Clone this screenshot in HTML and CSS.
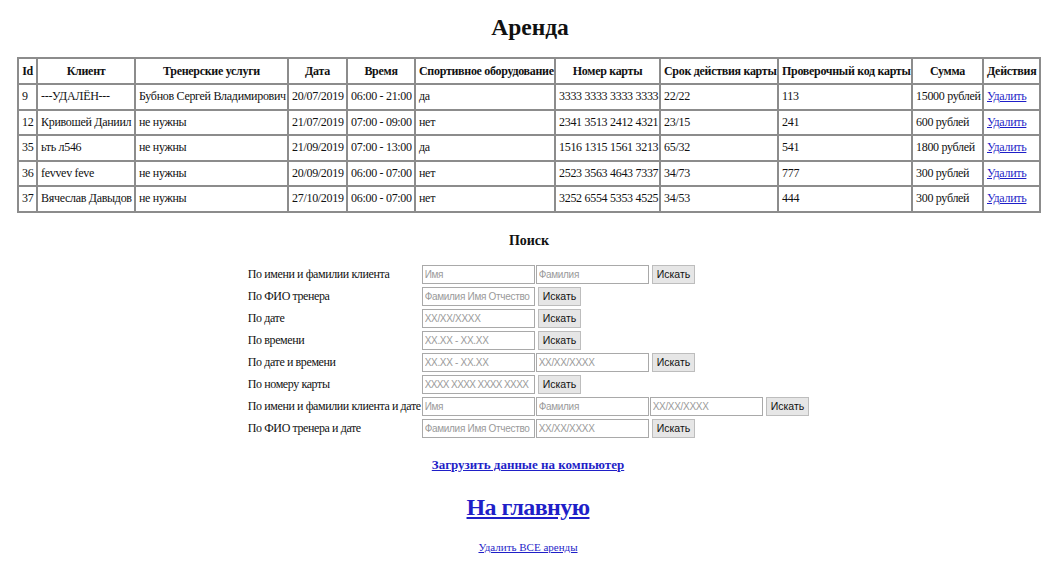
FILE: index.html
```html
<!DOCTYPE html>
<html lang="ru">
<head>
<meta charset="utf-8">
<title>Аренда</title>
<link rel="stylesheet" href="styles.css">
</head>
<body>
<h1 class="title">Аренда</h1>
<table class="rent">
  <colgroup>
    <col class="c-id"><col class="c-client"><col class="c-trainer"><col class="c-date"><col class="c-time"><col class="c-equip"><col class="c-card"><col class="c-exp"><col class="c-cvv"><col class="c-sum"><col class="c-act">
  </colgroup>
  <thead>
    <tr><th>Id</th><th>Клиент</th><th>Тренерские услуги</th><th>Дата</th><th>Время</th><th>Спортивное оборудование</th><th>Номер карты</th><th>Срок действия карты</th><th>Проверочный код карты</th><th>Сумма</th><th>Действия</th></tr>
  </thead>
  <tbody>
    <tr><td>9</td><td>---УДАЛЁН---</td><td>Бубнов Сергей Владимирович</td><td>20/07/2019</td><td>06:00 - 21:00</td><td>да</td><td>3333 3333 3333 3333</td><td>22/22</td><td>113</td><td>15000 рублей</td><td><a href="#">Удалить</a></td></tr>
    <tr><td>12</td><td>Кривошей Даниил</td><td>не нужны</td><td>21/07/2019</td><td>07:00 - 09:00</td><td>нет</td><td>2341 3513 2412 4321</td><td>23/15</td><td>241</td><td>600 рублей</td><td><a href="#">Удалить</a></td></tr>
    <tr><td>35</td><td>ьть л546</td><td>не нужны</td><td>21/09/2019</td><td>07:00 - 13:00</td><td>да</td><td>1516 1315 1561 3213</td><td>65/32</td><td>541</td><td>1800 рублей</td><td><a href="#">Удалить</a></td></tr>
    <tr><td>36</td><td>fevvev feve</td><td>не нужны</td><td>20/09/2019</td><td>06:00 - 07:00</td><td>нет</td><td>2523 3563 4643 7337</td><td>34/73</td><td>777</td><td>300 рублей</td><td><a href="#">Удалить</a></td></tr>
    <tr><td>37</td><td>Вячеслав Давыдов</td><td>не нужны</td><td>27/10/2019</td><td>06:00 - 07:00</td><td>нет</td><td>3252 6554 5353 4525</td><td>34/53</td><td>444</td><td>300 рублей</td><td><a href="#">Удалить</a></td></tr>
  </tbody>
</table>

<h3 class="search-title">Поиск</h3>
<table class="search">
  <tr><td class="lbl">По имени и фамилии клиента</td><td><input placeholder="Имя"></td><td><input placeholder="Фамилия"></td><td><button>Искать</button></td><td></td></tr>
  <tr><td class="lbl">По ФИО тренера</td><td><input placeholder="Фамилия Имя Отчество"></td><td><button>Искать</button></td><td></td><td></td></tr>
  <tr><td class="lbl">По дате</td><td><input placeholder="XX/XX/XXXX"></td><td><button>Искать</button></td><td></td><td></td></tr>
  <tr><td class="lbl">По времени</td><td><input placeholder="XX.XX - XX.XX"></td><td><button>Искать</button></td><td></td><td></td></tr>
  <tr><td class="lbl">По дате и времени</td><td><input placeholder="XX.XX - XX.XX"></td><td><input placeholder="XX/XX/XXXX"></td><td><button>Искать</button></td><td></td></tr>
  <tr><td class="lbl">По номеру карты</td><td><input class="narrow" placeholder="XXXX XXXX XXXX XXXX"></td><td><button>Искать</button></td><td></td><td></td></tr>
  <tr><td class="lbl">По имени и фамилии клиента и дате</td><td><input placeholder="Имя"></td><td><input placeholder="Фамилия"></td><td><input placeholder="XX/XX/XXXX"></td><td><button>Искать</button></td></tr>
  <tr><td class="lbl">По ФИО тренера и дате</td><td><input placeholder="Фамилия Имя Отчество"></td><td><input placeholder="XX/XX/XXXX"></td><td><button>Искать</button></td><td></td></tr>
</table>

<div class="links">
  <a class="download" href="#">Загрузить данные на компьютер</a>
  <a class="home" href="#">На главную</a>
  <a class="delall" href="#">Удалить ВСЕ аренды</a>
</div>
</body>
</html>
```

FILE: styles.css
```css
html, body {
  background: #fff;
}
body {
  margin: 0;
  padding: 0 12px 0 6px;
  font-family: "Liberation Serif", "Times New Roman", serif;
  font-size: 13px;
  color: #111;
}
a {
  color: #1f1fc8;
}
.title {
  margin: 14px 0 16px;
  padding-left: 4px;
  text-align: center;
  font-size: 23.5px;
  line-height: 27px;
  font-weight: bold;
}
.rent {
  table-layout: fixed;
  width: 1023px;
  margin: 0 0 0 11px;
  border-collapse: collapse;
  border: 2px solid #8c8c8c;
}
.rent th,
.rent td {
  border: 2px solid #8c8c8c;
  padding: 0 3px;
  white-space: nowrap;
  overflow: hidden;
  font-size: 12px;
  letter-spacing: -0.3px;
  line-height: 15px;
}
.rent th {
  height: 24px;
  font-weight: bold;
  text-align: center;
}
.rent td {
  height: 23.5px;
  text-align: left;
}
.c-id { width: 19px; }
.c-client { width: 98px; }
.c-trainer { width: 153px; }
.c-date { width: 59px; }
.c-time { width: 68px; }
.c-equip { width: 140px; }
.c-card { width: 105px; }
.c-exp { width: 118px; }
.c-cvv { width: 134px; }
.c-sum { width: 71px; }
.c-act { width: 57px; }

.search-title {
  margin: 19px 0 13px;
  padding-left: 2px;
  text-align: center;
  font-size: 14px;
  line-height: 17px;
  font-weight: bold;
}
.search {
  margin: 0 auto;
  border-collapse: separate;
  border-spacing: 1px 3px;
}
.search td {
  padding: 0;
  height: 19px;
  vertical-align: middle;
}
.search .lbl {
  padding: 0 0 0 1px;
  white-space: nowrap;
  font-size: 12px;
  letter-spacing: -0.4px;
  line-height: 15px;
}
.search input {
  box-sizing: border-box;
  width: 113px;
  height: 19px;
  margin: 0;
  padding: 0 2px;
  border: 1px solid #a9a9a9;
  font-family: "Liberation Sans", Arial, sans-serif;
  font-size: 10px;
  letter-spacing: -0.3px;
  color: #333;
  background: #fff;
  display: block;
}
.search input.narrow {
  letter-spacing: -0.6px;
}
.search input::placeholder {
  color: #9a9a9a;
}
.search button {
  box-sizing: border-box;
  height: 19px;
  margin: 0 0 0 2px;
  padding: 0 4px;
  border: 1px solid #bdbdbd;
  background: #e6e6e6;
  font-family: "Liberation Sans", Arial, sans-serif;
  font-size: 10.5px;
  color: #111;
  display: block;
}
.links {
  display: flex;
  flex-direction: column;
  align-items: center;
}
.download {
  margin-top: 16px;
  font-weight: bold;
  font-size: 13px;
  line-height: 16px;
}
.home {
  margin-top: 19px;
  font-weight: bold;
  font-size: 24px;
  letter-spacing: -0.6px;
  line-height: 30px;
}
.delall {
  margin-top: 18px;
  font-size: 11px;
  line-height: 14px;
}
```
